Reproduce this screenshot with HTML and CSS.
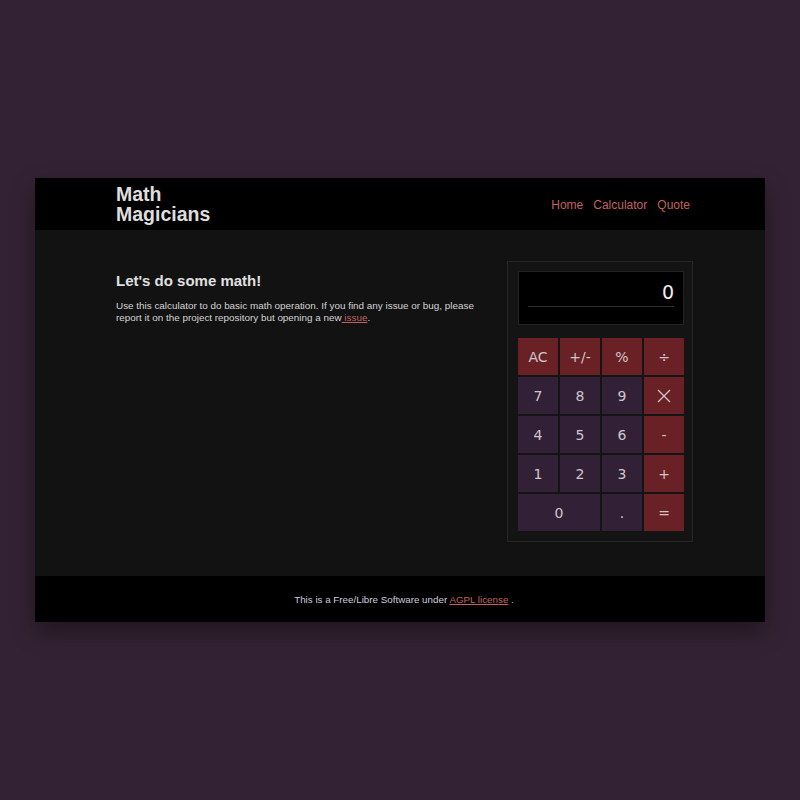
FILE: index.html
```html
<!DOCTYPE html>
<html>
<head>
<meta charset="utf-8">
<link rel="stylesheet" href="styles.css">
</head>
<body>
<div class="app">
  <header class="header">
    <h1 class="logo">Math<br>Magicians</h1>
    <nav class="nav">
      <a href="#">Home</a>
      <a href="#">Calculator</a>
      <a href="#">Quote</a>
    </nav>
  </header>
  <main class="main">
    <section class="intro">
      <h2 class="intro-title">Let's do some math!</h2>
      <p class="intro-text">Use this calculator to do basic math operation. If you find any issue or bug, please report it on the project repository but opening a new<a href="#"> issue</a>.</p>
    </section>
    <div class="calc">
      <div class="display"><div class="display-value">0</div></div>
      <div class="keys">
        <button class="key op">AC</button>
        <button class="key op">+/-</button>
        <button class="key op">%</button>
        <button class="key op">÷</button>
        <button class="key">7</button>
        <button class="key">8</button>
        <button class="key">9</button>
        <button class="key op"><svg width="16" height="16" viewBox="0 0 16 16"><path d="M2 2L14 14M14 2L2 14" stroke="#cfc6cc" stroke-width="1.3" fill="none"/></svg></button>
        <button class="key">4</button>
        <button class="key">5</button>
        <button class="key">6</button>
        <button class="key op">-</button>
        <button class="key">1</button>
        <button class="key">2</button>
        <button class="key">3</button>
        <button class="key op">+</button>
        <button class="key zero">0</button>
        <button class="key">.</button>
        <button class="key op">=</button>
      </div>
    </div>
  </main>
  <footer class="footer">
    <p>This is a Free/Libre Software under <a href="#">AGPL license</a> .</p>
  </footer>
</div>
</body>
</html>
```
FILE: styles.css
```css
html, body {
  margin: 0;
  padding: 0;
}
body {
  background: #332233;
  font-family: "Liberation Sans", Arial, sans-serif;
  color: #dcdcdc;
  padding-top: 178px;
  height: 800px;
  box-sizing: border-box;
}
.app {
  width: 730px;
  margin-left: 35px;
  box-shadow: 0 10px 22px rgba(0, 0, 0, 0.35);
}
.header {
  background: #000;
  height: 52px;
  display: flex;
  align-items: center;
  justify-content: space-between;
  padding: 0 75px 0 81px;
}
.logo {
  margin: 0;
  font-size: 19.5px;
  line-height: 20px;
  font-weight: bold;
  color: #dedede;
}
.nav {
  display: flex;
  gap: 10px;
  font-size: 12px;
  padding-top: 2px;
}
.nav a {
  color: #c0625e;
  text-decoration: none;
}
.main {
  background: #121212;
  display: flex;
  justify-content: space-between;
  padding: 31px 72px 34px 81px;
}
.intro {
  width: 368px;
  padding-top: 11px;
}
.intro-title {
  margin: 0 0 11px;
  font-size: 15px;
  font-weight: bold;
  color: #e0e0e0;
}
.intro-text {
  margin: 0;
  font-size: 9.9px;
  line-height: 12px;
  color: #d4d4d4;
}
.intro-text a {
  color: #c0625e;
}
.calc {
  width: 166px;
  border: 1px solid #262626;
  padding: 9px 8px 10px 10px;
  background: #141414;
}
.display {
  background: #000;
  height: 54px;
  border: 1px solid #222;
  box-sizing: border-box;
  padding: 0 9px;
}
.display-value {
  text-align: right;
  font-family: "DejaVu Sans", sans-serif;
  font-size: 19px;
  line-height: 22px;
  padding-top: 9px;
  height: 25px;
  border-bottom: 1px solid #2e2e2e;
  color: #f0f0f0;
}
.keys {
  margin-top: 13px;
  display: grid;
  grid-template-columns: repeat(4, 40px);
  grid-auto-rows: 37px;
  column-gap: 2px;
  row-gap: 2px;
}
.key {
  border: 0;
  margin: 0;
  padding: 0;
  background: #322136;
  color: #cfc6cc;
  font-family: "DejaVu Sans", sans-serif;
  font-size: 14px;
  display: flex;
  align-items: center;
  justify-content: center;
}
.key.op {
  background: #6a2125;
}
.key.zero {
  grid-column: span 2;
}
.footer {
  background: #000;
  height: 46px;
  display: flex;
  align-items: center;
  justify-content: center;
  padding-left: 8px;
}
.footer p {
  margin: 0;
  font-size: 9.8px;
  color: #ccd;
}
.footer a {
  color: #c0625e;
}
```
